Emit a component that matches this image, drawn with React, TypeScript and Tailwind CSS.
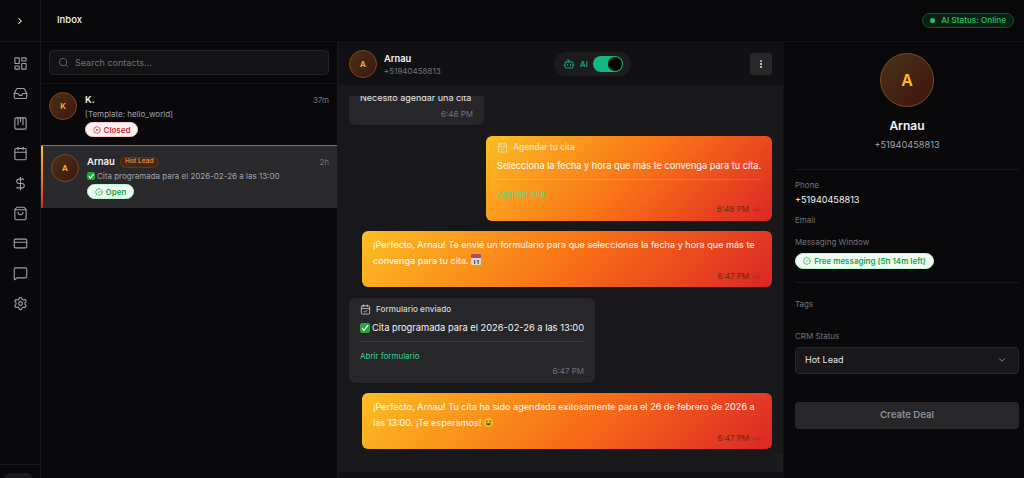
import React from "react";
import { LayoutDashboard, Inbox, Calendar, CalendarCheck, DollarSign, ShoppingBag, CreditCard, MessageSquare, Settings, ChevronRight, ChevronDown, Search, CircleX, CircleCheck, Bot, MoreVertical, CheckCheck } from "lucide-react";

function Kanban() {
  return (
    <svg width="15" height="15" viewBox="0 0 24 24" fill="none" stroke="currentColor" strokeWidth="1.75" strokeLinecap="round" strokeLinejoin="round">
      <rect x="3" y="3" width="18" height="18" rx="2" />
      <path d="M8 3v11" />
      <path d="M12 3v6" />
      <path d="M16 3v11" />
    </svg>
  );
}

function Tick({ size }: { size: string }) {
  return (
    <span className={`${size} inline-flex shrink-0 rounded-[2px] bg-[#22a83c] items-center justify-center mr-[2px]`}>
      <svg width="80%" height="80%" viewBox="0 0 24 24" fill="none" stroke="#fff" strokeWidth="4" strokeLinecap="round" strokeLinejoin="round"><path d="M4 13l5 6L20 5" /></svg>
    </span>
  );
}

function CalEmoji() {
  return (
    <svg width="10" height="11" viewBox="0 0 10 11" className="inline-block align-[-1px]">
      <rect x="0" y="0" width="10" height="11" rx="1" fill="#d9d5d2" />
      <path d="M0 1a1 1 0 0 1 1-1h8a1 1 0 0 1 1 1v3H0z" fill="#a8505e" />
      <rect x="3" y="6" width="1.2" height="4" fill="#555" />
      <rect x="6" y="6" width="1.8" height="1.2" fill="#555" />
      <rect x="6.6" y="7" width="1.1" height="3" fill="#555" />
    </svg>
  );
}

function SmileEmoji() {
  return (
    <svg width="9" height="9" viewBox="0 0 10 10" className="inline-block align-[-1px]">
      <circle cx="5" cy="5" r="5" fill="#f2c21f" />
      <rect x="2.4" y="3" width="1.4" height="1.6" fill="#5c4410" />
      <rect x="6.2" y="3" width="1.4" height="1.6" fill="#5c4410" />
      <path d="M2.2 5.8h5.6a2.8 2.6 0 0 1-5.6 0z" fill="#6b5014" />
    </svg>
  );
}

function Avatar({ letter, size, text }: { letter: string; size: string; text: string }) {
  return (
    <div className={`${size} ${text} shrink-0 rounded-full border border-[#7c4a1c] bg-gradient-to-br from-[#4a3115] to-[#3d1510] flex items-center justify-center text-[#fbbf24] font-semibold`}>
      {letter}
    </div>
  );
}

function SideIcon({ children }: { children: React.ReactNode }) {
  return <div className="h-[30px] flex items-center justify-center text-[#a1a1aa]">{children}</div>;
}

function Meta({ time, dark }: { time: string; dark?: boolean }) {
  return (
    <div className={`flex items-center justify-end gap-[3px] text-[8px] leading-[12px] ${dark ? "text-[#6e2a12]" : "text-[#71717a]"}`}>
      <span>{time}</span>
      {dark && <CheckCheck size={9} strokeWidth={1.5} />}
    </div>
  );
}

function Out({ children, time }: { children: React.ReactNode; time: string }) {
  return (
    <div className="self-end w-[410px] h-[56px] shrink-0 rounded-[6px] px-[11px] pt-[6px] bg-[linear-gradient(135deg,#fbbf24,#f97316_50%,#dc2626)] text-white text-[9.1px] leading-[15.5px] flex flex-col">
      <div className="flex-1">{children}</div>
      <div className="pb-[5px]"><Meta time={time} dark /></div>
    </div>
  );
}

function Label({ children }: { children: React.ReactNode }) {
  return <div className="text-[8px] leading-[12px] text-[#71717a]">{children}</div>;
}

export default function App() {
  return (
    <div className="w-[1024px] h-[478px] overflow-hidden flex bg-[#09090b] text-white font-['Inter','Liberation_Sans',sans-serif]">
      {/* sidebar */}
      <aside className="w-[41px] shrink-0 border-r border-[#18181b] flex flex-col">
        <div className="h-[42px] shrink-0 border-b border-[#18181b] flex items-center justify-center text-white">
          <ChevronRight size={10} strokeWidth={2.5} />
        </div>
        <nav className="flex-1 pt-[6px] flex flex-col">
          <SideIcon><LayoutDashboard size={15} strokeWidth={1.75} /></SideIcon>
          <SideIcon><Inbox size={15} strokeWidth={1.75} /></SideIcon>
          <SideIcon><Kanban /></SideIcon>
          <SideIcon><Calendar size={15} strokeWidth={1.75} /></SideIcon>
          <SideIcon><DollarSign size={15} strokeWidth={1.75} /></SideIcon>
          <SideIcon><ShoppingBag size={15} strokeWidth={1.75} /></SideIcon>
          <SideIcon><CreditCard size={15} strokeWidth={1.75} /></SideIcon>
          <SideIcon><MessageSquare size={15} strokeWidth={1.75} /></SideIcon>
          <SideIcon><Settings size={15} strokeWidth={1.75} /></SideIcon>
        </nav>
        <div className="h-[14px] shrink-0 border-t border-[#18181b] pl-[5px] pt-[8px]">
          <div className="w-[27px] h-[6px] rounded-t-[5px] bg-[#1c1c20]" />
        </div>
      </aside>

      <div className="flex-1 flex flex-col min-w-0">
        {/* top bar */}
        <header className="h-[42px] shrink-0 border-b border-[#131316] flex items-center justify-between pl-[16px] pr-[10px]">
          <div className="text-[9.5px] font-medium text-[#f4f4f5]">Inbox</div>
          <div className="h-[15px] px-[7px] rounded-full border border-[#14532d] bg-[#0a2015] flex items-center gap-[6px] text-[8.2px] font-medium text-[#22c55e]">
            <span className="w-[5px] h-[5px] rounded-full bg-[#22c55e]" />
            AI Status: Online
          </div>
        </header>

        <div className="flex-1 flex min-h-0">
          {/* contacts */}
          <section className="w-[297px] shrink-0 border-r border-[#18181b] flex flex-col">
            <div className="h-[42px] shrink-0 border-b border-[#131316] px-[8px] flex items-center">
              <div className="w-full h-[25px] rounded-[4px] border border-[#232326] bg-[#131316] flex items-center gap-[6px] px-[8px] text-[#71717a]">
                <Search size={11} strokeWidth={1.75} />
                <span className="text-[9px]">Search contacts...</span>
              </div>
            </div>
            <div className="h-[61px] shrink-0 pl-[8px] pr-[8px] pt-[8px] flex gap-[8px]">
              <Avatar letter="K" size="w-[28px] h-[28px]" text="text-[8px]" />
              <div className="flex-1 min-w-0 pt-[1px]">
                <div className="flex justify-between items-center h-[14px]">
                  <span className="text-[9.5px] font-semibold text-[#f4f4f5]">K.</span>
                  <span className="text-[8px] text-[#71717a]">37m</span>
                </div>
                <div className="text-[8px] leading-[12px] text-[#a1a1aa] mt-[1px]">[Template: hello_world]</div>
                <div className="mt-[2px] w-[53px] h-[15px] rounded-full bg-[#fef2f2] border border-[#fecaca] text-[#c62828] flex items-center justify-center gap-[3px] text-[8px] font-semibold">
                  <CircleX size={8} strokeWidth={2} />Closed
                </div>
              </div>
            </div>
            <div className="h-[63px] shrink-0 relative bg-[#2a2a2d] border-t border-[#a16a1c] pl-[10px] pr-[8px] pt-[8px] flex gap-[8px]">
              <div className="absolute left-0 top-0 bottom-0 w-[2px] bg-gradient-to-b from-[#fbbf24] to-[#dc2626]" />
              <Avatar letter="A" size="w-[28px] h-[28px]" text="text-[8px]" />
              <div className="flex-1 min-w-0 pt-[1px]">
                <div className="flex justify-between items-center h-[14px]">
                  <div className="flex items-center gap-[5px]">
                    <span className="text-[9.5px] font-semibold text-[#f4f4f5]">Arnau</span>
                    <span className="h-[11px] w-[39px] justify-center rounded-full bg-[#44291a] border border-[#5c3820] text-[#e8803a] text-[6.6px] font-semibold flex items-center">Hot Lead</span>
                  </div>
                  <span className="text-[8px] text-[#71717a]">2h</span>
                </div>
                <div className="text-[8px] leading-[12px] text-[#a1a1aa] mt-[1px] flex items-center"><Tick size="w-[8px] h-[8px]" />Cita programada para el 2026-02-26 a las 13:00</div>
                <div className="mt-[2px] w-[47px] h-[15px] rounded-full bg-[#f0fdf4] border border-[#bbf7d0] text-[#16a34a] flex items-center justify-center gap-[3px] text-[8px] font-semibold">
                  <CircleCheck size={8} strokeWidth={2} />Open
                </div>
              </div>
            </div>
          </section>

          {/* chat */}
          <section className="w-[445px] shrink-0 flex flex-col bg-[#18181b]">
            <div className="h-[43px] shrink-0 bg-[#111113] pl-[11px] pr-[11px] flex items-center">
              <div className="w-[205px] flex items-center gap-[7px] pt-[1px]">
                <Avatar letter="A" size="w-[28px] h-[28px]" text="text-[8px]" />
                <div>
                  <div className="text-[9.3px] font-semibold leading-[13px] text-[#f4f4f5]">Arnau</div>
                  <div className="text-[8px] leading-[12px] text-[#71717a]">+51940458813</div>
                </div>
              </div>
              <div className="h-[24px] w-[77px] rounded-full bg-[#1c1c1f] flex items-center pl-[9px] gap-[5px] text-[#10b981]">
                <Bot size={12} strokeWidth={1.75} />
                <span className="text-[8px] font-medium w-[8px]">AI</span>
                <div className="w-[30px] h-[16px] rounded-full bg-[#10b981] flex items-center justify-end pr-[1px]">
                  <div className="w-[14px] h-[14px] rounded-full bg-black" />
                </div>
              </div>
              <div className="ml-auto w-[22px] h-[22px] rounded-[3px] bg-[#27272a] flex items-center justify-center text-white">
                <MoreVertical size={10} strokeWidth={2.5} />
              </div>
            </div>
            <div className="flex-1 min-h-0 flex flex-col relative">
              <div className="h-[11px] shrink-0" />
              <div className="flex-1 min-h-0 overflow-hidden flex flex-col justify-end gap-[10.5px] pl-[11px] pr-[11px] pb-[23px]">
                <div className="w-[135px] h-[40px] shrink-0 rounded-b-[6px] bg-[#27272a] flex flex-col px-[11px] pt-[7px]">
                  <div className="text-[9px] leading-[12px] text-[#e4e4e7]">Necesito agendar una cita</div>
                  <div className="mt-[4px]"><Meta time="6:46 PM" /></div>
                </div>
                <div className="self-end w-[286px] h-[85px] shrink-0 rounded-[6px] px-[11px] pt-[6px] bg-[linear-gradient(135deg,#fbbf24,#f97316_50%,#dc2626)] text-white flex flex-col">
                  <div className="flex items-center gap-[5px] text-[8.4px] font-semibold text-[#fbdfae] h-[11px]">
                    <CalendarCheck size={11} strokeWidth={1.75} />Agendar tu cita
                  </div>
                  <div className="text-[9.2px] leading-[14px] mt-[6.5px] whitespace-nowrap">Selecciona la fecha y hora que más te convenga para tu cita.</div>
                  <div className="h-px bg-[#ffffff26] mt-[6px]" />
                  <div className="text-[8px] leading-[12px] mt-[8px] text-[#5fd77c]">Agendar cita</div>
                  <div className="mt-[3px]"><Meta time="6:46 PM" dark /></div>
                </div>
                <Out time="6:47 PM">¡Perfecto, Arnau! Te envié un formulario para que selecciones la fecha y hora que más te<br />convenga para tu cita. <CalEmoji /></Out>
                <div className="w-[246px] h-[85px] shrink-0 rounded-[6px] bg-[#27272a] px-[11px] pt-[6px] flex flex-col">
                  <div className="flex items-center gap-[5px] text-[8.2px] font-medium text-[#d4d4d8] h-[11px]">
                    <CalendarCheck size={11} strokeWidth={1.75} />Formulario enviado
                  </div>
                  <div className="text-[9.3px] leading-[14px] mt-[6.5px] text-[#f4f4f5] flex items-center whitespace-nowrap"><Tick size="w-[10px] h-[10px]" />Cita programada para el 2026-02-26 a las 13:00</div>
                  <div className="h-px bg-[#3a3a3e] mt-[6px]" />
                  <div className="text-[8px] leading-[12px] mt-[8px] text-[#34d399]">Abrir formulario</div>
                  <div className="mt-[3px]"><Meta time="6:47 PM" /></div>
                </div>
                <Out time="6:47 PM">¡Perfecto, Arnau! Tu cita ha sido agendada exitosamente para el 26 de febrero de 2026 a<br />las 13:00. ¡Te esperamos! <SmileEmoji /></Out>
              </div>
              <div className="h-[6px] shrink-0 bg-[#111113]" />
              <div className="absolute right-0 bottom-[6px] w-[6px] h-[18px] bg-[#1d1d20]" />
            </div>
          </section>

          {/* details */}
          <section className="flex-1 min-w-0 pl-[11px] pr-[5px] flex flex-col border-l border-[#111113]">
            <div className="flex flex-col items-center pt-[11px] pb-[16.5px] border-b border-[#18181b]">
              <Avatar letter="A" size="w-[54px] h-[54px]" text="text-[16px]" />
              <div className="mt-[11px] text-[12px] leading-[16px] font-semibold text-[#f4f4f5]">Arnau</div>
              <div className="mt-[4px] text-[9.2px] leading-[14px] text-[#a1a1aa]">+51940458813</div>
            </div>
            <div className="mt-[9px]"><Label>Phone</Label></div>
            <div className="text-[9.1px] leading-[14px] mt-[2.5px] text-[#f4f4f5]">+51940458813</div>
            <div className="mt-[7px]"><Label>Email</Label></div>
            <div className="mt-[10px]"><Label>Messaging Window</Label></div>
            <div className="mt-[5px] w-[139px] h-[15.5px] rounded-full bg-[#f0fdf4] border border-[#bbf7d0] text-[#16a34a] flex items-center justify-center gap-[3px] text-[8px] font-semibold">
              <CircleCheck size={8} strokeWidth={2} />Free messaging (5h 14m left)
            </div>
            <div className="mt-[13px] border-t border-[#18181b]" />
            <div className="mt-[15px]"><Label>Tags</Label></div>
            <div className="mt-[20px]"><Label>CRM Status</Label></div>
            <div className="mt-[5px] h-[27px] rounded-[4px] border border-[#27272a] bg-[#18181b] flex items-center justify-between pl-[9px] pr-[11px] text-[9px] text-[#e4e4e7]">
              Hot Lead
              <ChevronDown size={10} className="text-[#a1a1aa]" />
            </div>
            <div className="mt-[28px] h-[27px] rounded-[4px] bg-[#27272a] flex items-center justify-center text-[9.6px] font-semibold text-[#8e8e96]">Create Deal</div>
          </section>
        </div>
      </div>
    </div>
  );
}
